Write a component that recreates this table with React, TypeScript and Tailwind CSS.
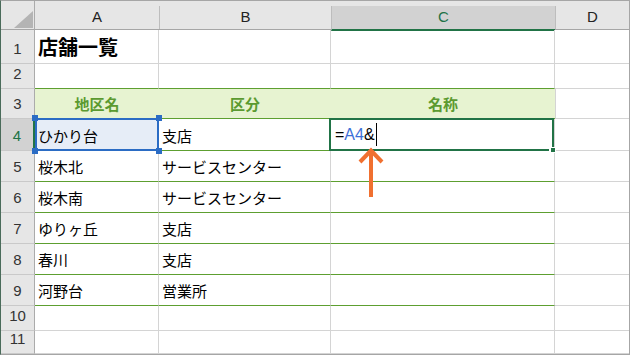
import React from "react";

const sans = { fontFamily: '"Liberation Sans", Arial, sans-serif' };
const jp = { fontFamily: '"Noto Sans CJK JP", "Noto Sans", sans-serif' };

type Row = { n: string; a?: string; b?: string };

const bodyRows: Row[] = [
  { n: "5", a: "桜木北", b: "サービスセンター" },
  { n: "6", a: "桜木南", b: "サービスセンター" },
  { n: "7", a: "ゆりヶ丘", b: "支店" },
  { n: "8", a: "春川", b: "支店" },
  { n: "9", a: "河野台", b: "営業所" },
];

function RowHead({ n, active = false }: { n: string; active?: boolean }) {
  return (
    <div
      style={sans}
      className={
        active
          ? "flex items-end justify-center border-b border-r-2 border-b-[#c9c9c9] border-r-[#217346] bg-[#d2d2d2] pb-[7px] text-[15px] leading-none text-[#217346]"
          : "flex items-end justify-center border-b border-r border-b-[#c9c9c9] border-r-[#ababab] bg-[#e6e6e6] pb-[7px] text-[15px] leading-none text-[#333]"
      }
    >
      {n}
    </div>
  );
}

function ColHead({ label, active = false, last = false }: { label: string; active?: boolean; last?: boolean }) {
  return (
    <div className="flex flex-col border-b border-b-[#a6a6a6] bg-[#e6e6e6] pt-[5px]">
      <div
        style={sans}
        className={
          active
            ? "-mb-px flex flex-1 items-center justify-center border-b-2 border-l border-b-[#217346] border-l-[#bdbdbd] bg-[#d2d2d2] text-[15px] text-[#217346]"
            : last
              ? "flex flex-1 items-center justify-center border-l border-l-[#bdbdbd] text-[15px] text-[#222]"
              : "flex flex-1 items-center justify-center text-[15px] text-[#222]"
        }
      >
        {label}
      </div>
    </div>
  );
}

function Plain({ text, right = true }: { text?: string; right?: boolean }) {
  return (
    <div
      style={jp}
      className={
        right
          ? "flex items-center border-b border-r border-[#d4d4d4] pl-[3px] text-[15px] leading-none text-black"
          : "flex items-center border-b border-[#d4d4d4] pl-[3px] text-[15px] leading-none text-black"
      }
    >
      {text}
    </div>
  );
}

function Body({ text }: { text?: string }) {
  return (
    <div
      style={jp}
      className="flex items-center border-b border-r border-b-[#5d9f30] border-r-[#d4d4d4] pl-[3px] pt-px text-[15px] leading-none text-black"
    >
      {text}
    </div>
  );
}

function TopGreen({ text, right = true }: { text?: string; right?: boolean }) {
  return (
    <div
      style={jp}
      className={
        right
          ? "flex items-center border-b border-r border-b-[#5d9f30] border-r-[#d4d4d4] pl-[3px] text-[15px] leading-none"
          : "flex items-center border-b border-b-[#5d9f30] pl-[3px] text-[15px] leading-none"
      }
    >
      {text}
    </div>
  );
}

function Corner() {
  return (
    <div className="relative border-b border-r border-b-[#a6a6a6] border-r-[#ababab] bg-[#e6e6e6]">
      <svg className="absolute left-[13px] top-[10px]" width="19" height="17" viewBox="0 0 19 17">
        <polygon points="19,0 19,17 0,17" fill="#b4b4b4" />
      </svg>
    </div>
  );
}

function Handle({ className }: { className: string }) {
  return <span className={"absolute h-[6px] w-[6px] bg-[#2b6cc4] " + className} />;
}

export default function App() {
  return (
    <div className="h-[355px] w-[630px] overflow-hidden bg-white">
      <div className="relative h-[355px] w-[630px] border border-[#a6a6a6] border-l-[#4a6b5a]">
        <div className="grid h-full w-full grid-cols-[34px_124px_172px_224px_74px] grid-rows-[29px_34px_25px_30px_32px_31px_31px_31px_31px_31px_25px_23px]">
          {/* column headers */}
          <Corner />
          <ColHead label="A" />
          <div className="flex flex-col border-b border-b-[#a6a6a6] bg-[#e6e6e6] pt-[5px]">
            <div
              style={sans}
              className="flex flex-1 items-center justify-center border-l border-l-[#bdbdbd] text-[15px] text-[#222]"
            >
              B
            </div>
          </div>
          <ColHead label="C" active />
          <ColHead label="D" last />

          {/* row 1: title */}
          <RowHead n="1" />
          <div
            style={jp}
            className="flex items-end border-b border-r border-[#d4d4d4] pb-[6px] pl-[3px] text-[20px] font-bold leading-none text-black"
          >
            店舗一覧
          </div>
          <Plain />
          <Plain />
          <Plain right={false} />

          {/* row 2 */}
          <RowHead n="2" />
          <TopGreen />
          <TopGreen />
          <TopGreen />
          <Plain right={false} />

          {/* row 3: table header */}
          <RowHead n="3" />
          {["地区名", "区分", "名称"].map((h) => (
            <div
              key={h}
              style={jp}
              className="flex items-center justify-center border-b border-b-[#5d9f30] bg-[#e7f3d1] text-[15px] font-bold leading-none text-[#5b9a30]"
            >
              {h}
            </div>
          ))}
          <div className="border-b border-l border-[#d4d4d4]" />

          {/* row 4: selected source cell and active formula cell */}
          <RowHead n="4" active />
          <div
            style={jp}
            className="relative flex items-center border-b border-r border-b-[#5d9f30] border-r-[#d4d4d4] bg-[#e6edf7] pl-[3px] pt-px text-[15px] leading-none text-black"
          >
            ひかり台
            <span className="absolute -top-px bottom-[-1px] left-0 right-[-1px] border-2 border-[#2b6cc4]" />
            <Handle className="left-[-3px] top-[-4px]" />
            <Handle className="right-[-4px] top-[-4px]" />
            <Handle className="bottom-[-4px] left-[-3px]" />
            <Handle className="bottom-[-4px] right-[-4px]" />
          </div>
          <Body text="支店" />
          <div className="relative flex items-center border-b border-r border-b-[#5d9f30] border-r-[#d4d4d4] pl-[4px] text-[16px] leading-none">
            <span style={sans} className="text-black">=</span>
            <span style={sans} className="text-[#3d6fd8]">A4</span>
            <span style={sans} className="text-black">&amp;</span>
            <span className="ml-px h-[23px] w-px bg-black" />
            <span className="absolute -top-px bottom-[-1px] left-[-2px] right-0 border-2 border-[#217346]" />
            <span className="absolute bottom-[-1px] right-[2px] h-[2px] w-[3px] bg-white" />
            <span className="absolute bottom-[-3px] right-[-2px] h-[6px] w-[6px] border border-white bg-[#217346]" />
          </div>
          <div className="border-b border-[#d4d4d4]" />

          {/* rows 5-9 */}
          {bodyRows.map((r) => (
            <React.Fragment key={r.n}>
              <RowHead n={r.n} />
              <Body text={r.a} />
              <Body text={r.b} />
              <Body />
              <div className="border-b border-[#d4d4d4]" />
            </React.Fragment>
          ))}

          {/* rows 10-11 */}
          {["10", "11"].map((n) => (
            <React.Fragment key={n}>
              <RowHead n={n} />
              <Plain />
              <Plain />
              <Plain />
              <Plain right={false} />
            </React.Fragment>
          ))}
        </div>

        {/* arrow pointing at the typed reference */}
        <svg
          className="pointer-events-none absolute left-[354px] top-[145px]"
          width="32"
          height="54"
          viewBox="354 145 32 54"
        >
          <path d="M359 161 L370 149.5 L381 161" fill="none" stroke="#f07030" strokeWidth="4" strokeLinejoin="miter" />
          <line x1="370" y1="151" x2="370" y2="196" stroke="#f07030" strokeWidth="4" />
        </svg>
      </div>
    </div>
  );
}
